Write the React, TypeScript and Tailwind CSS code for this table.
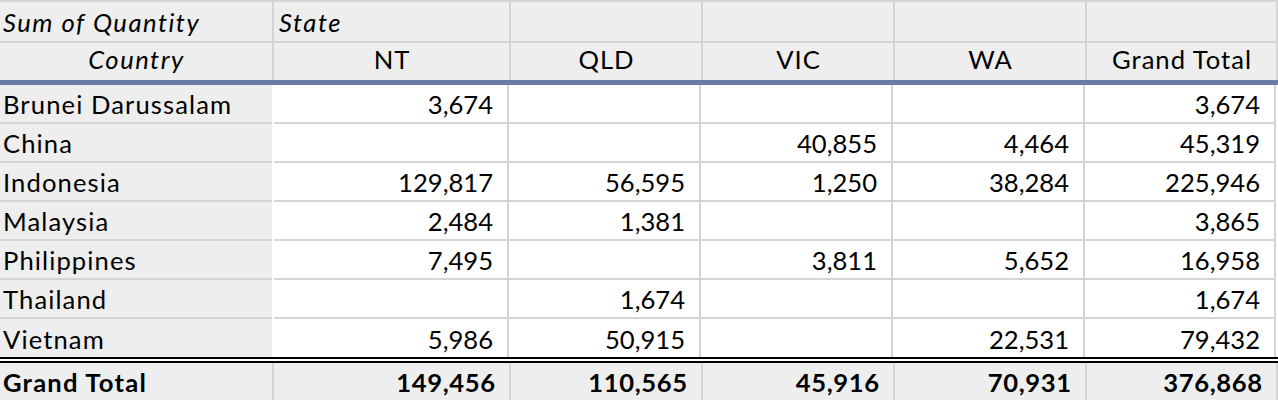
import React from "react";

const GRID = "border-[#d4d4d4]";
const widths = ["w-[237px]", "w-[192px]", "w-[192px]", "w-[192px]", "w-[191px]"];

const rows: [string, string[]][] = [
  ["Brunei Darussalam", ["3,674", "", "", "", "3,674"]],
  ["China", ["", "", "40,855", "4,464", "45,319"]],
  ["Indonesia", ["129,817", "56,595", "1,250", "38,284", "225,946"]],
  ["Malaysia", ["2,484", "1,381", "", "", "3,865"]],
  ["Philippines", ["7,495", "", "3,811", "5,652", "16,958"]],
  ["Thailand", ["", "1,674", "", "", "1,674"]],
  ["Vietnam", ["5,986", "50,915", "", "22,531", "79,432"]],
];

const totals = ["149,456", "110,565", "45,916", "70,931", "376,868"];
const heads = ["NT", "QLD", "VIC", "WA", "Grand Total"];

export default function App() {
  return (
    <div
      className="w-[1278px] h-[400px] overflow-hidden bg-white text-black text-[25.6px] leading-[1.2]"
      style={{ fontFamily: "Lato, 'Noto Sans', sans-serif" }}
    >
      {/* top gridline */}
      <div className="h-[2px] bg-[#d4d4d4]" />
      {/* header row 1 */}
      <div className={`flex h-[41px] border-b-2 ${GRID} bg-[#eeeeee]`}>
        <div className={`w-[274px] border-r-2 ${GRID} flex items-center pl-[3px] pt-[2px] italic tracking-[1.5px]`}>
          Sum of Quantity
        </div>
        <div className={`w-[237px] border-r-2 ${GRID} flex items-center pl-[5px] pt-[2px] italic tracking-[1.5px]`}>
          State
        </div>
        <div className={`w-[192px] border-r-2 ${GRID}`} />
        <div className={`w-[192px] border-r-2 ${GRID}`} />
        <div className={`w-[192px] border-r-2 ${GRID}`} />
        <div className={`w-[191px] border-r-2 ${GRID}`} />
      </div>
      {/* header row 2 */}
      <div className="flex h-[37px] bg-[#eeeeee]">
        <div className={`w-[274px] border-r-2 ${GRID} flex items-center justify-center pb-[4px] pl-[1px] italic tracking-[1.5px]`}>
          Country
        </div>
        {heads.map((h, i) => (
          <div
            key={h}
            className={`${widths[i]} border-r-2 ${GRID} flex items-center justify-center pb-[4px] pl-[1px] tracking-[1px]`}
          >
            {h}
          </div>
        ))}
      </div>
      {/* blue separator */}
      <div className="h-[5px] bg-[#6a7ca5]" />
      {/* body */}
      {rows.map(([name, vals], r) => {
        const last = r === rows.length - 1;
        const rowH = last ? "h-[38px]" : "h-[39px] border-b-2";
        return (
          <div key={name} className="flex">
            <div className={`w-[272px] ${rowH} ${GRID} bg-[#eeeeee] flex items-center pl-[3px] pt-[2px] tracking-[1.1px]`}>
              {name}
            </div>
            <div className="w-[2px] bg-white" />
            {vals.map((v, i) => (
              <div
                key={i}
                className={`${i === 0 ? "w-[235px]" : widths[i]} ${rowH} border-r-2 ${GRID} flex items-center justify-end pr-[14px] pt-[2px]`}
              >
                {v}
              </div>
            ))}
          </div>
        );
      })}
      {/* double line */}
      <div className="h-[6px] border-y-2 border-black bg-white" />
      {/* grand total */}
      <div className="flex h-[37px] bg-[#eeeeee] font-bold">
        <div className={`w-[274px] border-r-2 ${GRID} flex items-center pl-[3px] pt-[2px] tracking-[1.2px]`}>
          Grand Total
        </div>
        {totals.map((t, i) => (
          <div
            key={i}
            className={`${widths[i]} border-r-2 ${GRID} flex items-center justify-end pr-[14px] pt-[2px] tracking-[0.6px]`}
          >
            <span className="mr-[-0.6px]">{t}</span>
          </div>
        ))}
      </div>
    </div>
  );
}
